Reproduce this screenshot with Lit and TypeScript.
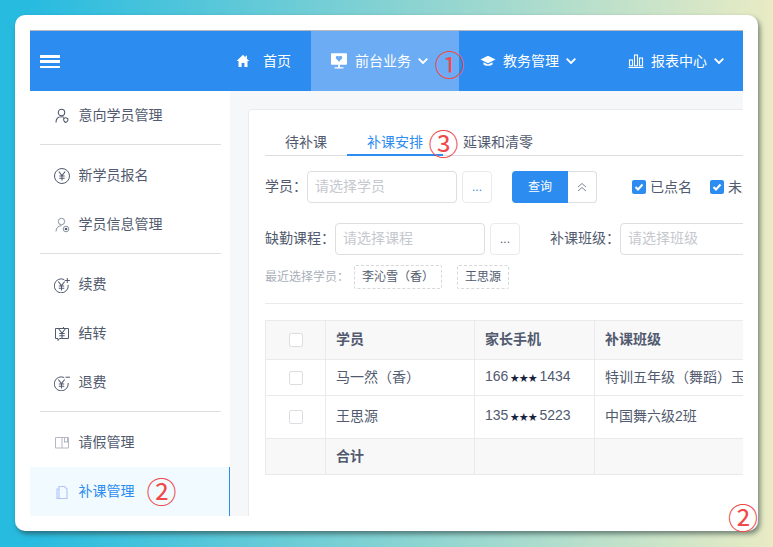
import { LitElement, html, css, svg } from "lit";
import { customElement } from "lit/decorators.js";

const chevron = html`<svg class="chev" viewBox="0 0 10 6" width="10" height="6"><path d="M.7.7 5 5 9.300.7" fill="none" stroke="#fff" stroke-width="1.900"/></svg>`;

const navIcons: Record<string, any> = {
  home: svg`<path d="M8 1.800 1.600 8h1.900v6h3.100V10h2.800v4h3.100V8h1.900L12 5.900V2.800h-1.500v1.600z" fill="#fff"/>`,
  desk: svg`<path fill-rule="evenodd" d="M.8.300h14.400a.8.8 0 0 1 .8.8v9.800a.8.8 0 0 1-.8.8H.8a.8.8 0 0 1-.8-.8V1.100a.8.8 0 0 1 .8-.8zM8 8.800 11 5.600a1.800 1.800 0 0 0-2.600-2.400L8 3.600l-.4-.4A1.800 1.800 0 0 0 5 5.600z" fill="#fff"/><path d="M7 11.500h2v2.700h3.500V15.600H3.500v-1.400H7z" fill="#fff"/>`,
  cap: svg`<path d="M8 2.800 .5 6.500 8 10.200l7.500-3.700z" fill="#fff"/><path d="M3.500 9.300V11.500C5 13.300 11 13.300 12.500 11.500V9.300L8 11.500z" fill="#fff"/>`,
  chart: svg`<g fill="none" stroke="#fff" stroke-width="1.100"><path d="M.5 14.500h15"/><rect x="1.500" y="7" width="3" height="5.800"/><rect x="6.500" y="2" width="3" height="10.800"/><rect x="11.500" y="5" width="3" height="7.800"/></g>`,
};

const navs = [
  { label: "首页", icon: "home", cls: "home" },
  { label: "前台业务", icon: "desk", cls: "active", chev: true },
  { label: "教务管理", icon: "cap", cls: "", chev: true },
  { label: "报表中心", icon: "chart", cls: "", chev: true },
];

const yen = (x: number, y: number) => svg`<path transform="translate(${x} ${y})" d="M-3.200-4.500 0-.4l3.200-4.100M0-.4v5M-2.700 0h5.400M-2.700 2.200h5.400" fill="none" stroke="#515a6e" stroke-width="1.050"/>`;
const sideIcons: Record<string, any> = {
  person: svg`<g fill="none" stroke="#515a6e" stroke-width="1.100"><circle cx="7.500" cy="4.500" r="3.200"/><path d="M2 14.500C2 10.800 4.300 8.700 7.500 8.700c1 0 1.800.2 2.500.6"/><path d="M9.800 10.500c1-1 2.700-.7 4 .2.600 1.600-.7 3.300-2 3.700-1.400-.4-2.600-2.300-2-3.900z"/></g>`,
  yen: svg`<circle cx="8" cy="8" r="7.500" fill="none" stroke="#515a6e" stroke-width="1"/>${yen(8, 8)}`,
  info: svg`<g fill="none" stroke="#8b92a0" stroke-width="1"><circle cx="7.500" cy="4.500" r="3.200"/><path d="M2 14.500C2 10.800 4.300 8.700 7.500 8.700"/><circle cx="12" cy="12" r="2.800"/></g><circle cx="12" cy="12" r="1.300" fill="#515a6e"/>`,
  plus: svg`<path d="M10.200 2.500A7 7 0 1 0 14.200 8" fill="none" stroke="#515a6e" stroke-width="1"/><path d="M10.800 3.500h5M13.300 1v5" stroke="#515a6e" stroke-width="1"/>${yen(7.500, 9)}`,
  trans: svg`<path d="M1.500 2.500H14.500V12.500H5.500L4 14.500V12.500H1.500z" fill="none" stroke="#515a6e" stroke-width="1"/><path d="M8.500 2.500 10 1" stroke="#515a6e"/>${yen(8, 7.500)}`,
  minus: svg`<path d="M10.200 2.500A7 7 0 1 0 14.200 8" fill="none" stroke="#515a6e" stroke-width="1"/><path d="M11.500 2.300h4.500" stroke="#7f8796" stroke-width="1.400"/>${yen(7.500, 9)}`,
  leave: svg`<g fill="none" stroke="#b4b8c2" stroke-width="1"><path d="M1.500 2.500H14.500V13H1.500zM8 2.500V13M10.500 2.500V7.500L12 6.500 13.500 7.500V2.500"/></g>`,
  doc: svg`<g fill="none" stroke="#b3c4f5" stroke-width="1.100"><path d="M5 2.500H10.500L13 5V14.500H5zM5 5H3V14.500H5"/></g>`,
};

const groups = [
  [{ label: "意向学员管理", icon: "person" }],
  [{ label: "新学员报名", icon: "yen" }, { label: "学员信息管理", icon: "info" }],
  [{ label: "续费", icon: "plus" }, { label: "结转", icon: "trans" }, { label: "退费", icon: "minus" }],
  [{ label: "请假管理", icon: "leave" }, { label: "补课管理", icon: "doc", active: true }],
];

const marks = [
  { n: "①", cls: "m1" },
  { n: "②", cls: "m2" },
  { n: "③", cls: "m3" },
  { n: "②", cls: "m4" },
];

@customElement("app-root")
export class AppRoot extends LitElement {
  static styles = css`
    :host {
      display: block; width: 773px; height: 547px; box-sizing: border-box; padding: 15px 15px 16px;
      background: linear-gradient(90deg, #28bbe0 4%, #e9ebc4 100%);
      font: 14px/20px "Liberation Sans", "Noto Sans CJK SC", sans-serif; color: #515a6e; overflow: hidden; position: relative;
    }
    * { box-sizing: border-box; }
    .win { height: 516px; padding: 15px; background: #fff; border-radius: 10px; box-shadow: 2px 3px 5px rgba(40,60,60,.6); }
    .app { height: 486px; overflow: hidden; display: flex; flex-direction: column; }
    header { height: 61px; flex: none; display: flex; background: #2d8cf0; border-top: 1px solid #b5b9be; color: #fff; }
    .burger { width: 186px; flex: none; padding: 24px 0 0 10px; }
    .burger i { display: block; width: 20px; height: 2.600px; background: #fff; margin-bottom: 2.800px; }
    .nav { flex: none; width: 148px; height: 60px; display: flex; align-items: center; padding-left: 20px; }
    .nav.home { width: 95px; }
    .nav.active { background: #6cacf4; }
    .nav svg.ic { margin-right: 8px; flex: none; }
    .nav.home svg.ic { margin-right: 12.500px; margin-left: -1.500px; }
    .nav .chev { margin-left: 7px; }
    .nav:nth-child(n+4) { padding-left: 21px; }
    .nav:nth-child(n+4) svg.ic { margin-right: 7px; }
    .body { flex: 1; display: flex; min-height: 0; }
    aside { width: 200px; flex: none; }
    .item { height: 49px; display: flex; align-items: center; padding: 0 0 2px 24px; gap: 8.500px; }
    .item svg { position: relative; top: 1px; }
    .item.on { background: #f0faff; color: #2d8cf0; border-right: 1px solid #2d8cf0; }
    .sep { height: 1px; background: #dcdee2; margin: 4px 9px 6px 10px; }
    main { flex: 1; min-width: 0; background: #f5f7f9; padding: 18px; overflow: hidden; }
    .card { width: 720px; height: 500px; background: #fff; border: 1px solid #e8eaec; border-radius: 4px; padding: 15px 16px; }
    .tabs { display: flex; height: 31px; border-bottom: 1px solid #dcdee2; margin-bottom: 15px; }
    .tab { height: 31px; padding: 7px 20px 0; border-bottom: 2px solid transparent; }
    .tab.on { color: #2d8cf0; border-bottom-color: #2d8cf0; }
    .row { display: flex; align-items: center; height: 32px; margin-bottom: 20px; white-space: nowrap; }
    .lab { flex: none; padding-bottom: 2px; }
    .l1 { width: 42px; } .l2 { width: 70px; }
    .input { flex: none; width: 150px; height: 32px; border: 1px solid #dcdee2; border-radius: 4px; padding: 4px 7px; color: #c5c8ce; }
    .dots { flex: none; width: 30px; height: 32px; margin-left: 5px; border: 1px solid #e8eaec; border-radius: 4px; display: flex; align-items: center; justify-content: center; color: #2d8cf0; font-size: 12px; }
    .dots.dark { color: #515a6e; }
    .query { flex: none; margin-left: 20px; width: 56px; height: 32px; background: #2d8cf0; color: #fff; font-size: 12px; border-radius: 4px 0 0 4px; display: flex; align-items: center; justify-content: center; }
    .more { flex: none; width: 29px; height: 32px; border: 1px solid #dcdee2; border-left: 0; border-radius: 0 4px 4px 0; display: flex; align-items: center; justify-content: center; }
    .check { display: flex; align-items: center; gap: 4px; }
    .c1 { margin-left: 35px; } .c2 { margin-left: 18px; }
    .box { width: 14px; height: 14px; background: #2d8cf0; border-radius: 2px; display: flex; align-items: center; justify-content: center; }
    .l3 { margin-left: 30px; }
    .recent { display: flex; align-items: center; height: 24px; margin-top: -10px; white-space: nowrap; }
    .rl { width: 89px; font-size: 12px; color: #a9afba; }
    .tag { height: 24px; padding: 0 7px; border: 1px dashed #d5d7db; border-radius: 2px; font-size: 12px; line-height: 22px; margin-right: 15px; }
    hr { border: 0; height: 1px; background: #e8eaec; margin: 14px 0 16px; }
    table { border-collapse: collapse; table-layout: fixed; width: 700px; border: 1px solid #dcdee2; }
    col.a { width: 60px; } col.b { width: 149px; } col.c { width: 120px; }
    td, th { border: 1px solid #e8eaec; padding: 0 10px 2px; text-align: left; white-space: nowrap; overflow: hidden; font-weight: 400; }
    td.k, th.k { padding: 0; }
    td.k + td, th.k + th { padding-left: 10px; }
    th, .foot td { background: #f8f8f9; font-weight: 700; }
    tr.h { height: 39px; } tr.r1 { height: 36px; } tr.r2 { height: 43px; } tr.f { height: 36px; }
    .cb { display: block; margin: 0 auto; width: 14px; height: 14px; border: 1px solid #dcdee2; border-radius: 2px; background: #fff; }
    .star { font-size: 9px; color: #17233d; margin: 0 2px; letter-spacing: 0; }
    .mark { position: absolute; width: 30px; height: 30px; color: #ee4a4a; font: 400 30px/30px "Noto Sans CJK SC", sans-serif; text-align: center; }
    .m1 { left: 434.500px; top: 47.500px; }
    .m2 { left: 146.500px; top: 475px; }
    .m3 { left: 428.500px; top: 126.500px; }
    .m4 { left: 728px; top: 500.500px; }
  `;

  render() {
    const tick = html`<span class="box"><svg width="10" height="10" viewBox="0 0 10 10"><path d="M1.500 5 4 7.500 8.500 2.500" fill="none" stroke="#fff" stroke-width="2"/></svg></span>`;
    return html`
      <div class="win"><div class="app">
        <header>
          <div class="burger"><i></i><i></i><i></i></div>
          ${navs.map((n) => html`<div class="nav ${n.cls}">
            <svg class="ic" viewBox="0 0 16 16" width="16" height="16">${navIcons[n.icon]}</svg>
            ${n.label}${n.chev ? chevron : ""}
          </div>`)}
        </header>
        <div class="body">
          <aside>
            ${groups.map((g, i) => html`
              ${i ? html`<div class="sep"></div>` : ""}
              ${g.map((it: any) => html`<div class="item ${it.active ? "on" : ""}">
                <svg viewBox="0 0 16 16" width="16" height="16">${sideIcons[it.icon]}</svg>${it.label}
              </div>`)}
            `)}
          </aside>
          <main>
            <div class="card">
              <div class="tabs">
                <div class="tab">待补课</div><div class="tab on">补课安排</div><div class="tab">延课和清零</div>
              </div>
              <div class="row">
                <div class="lab l1">学员：</div>
                <div class="input">请选择学员</div>
                <div class="dots">...</div>
                <div class="query">查询</div>
                <div class="more"><svg width="12" height="12" viewBox="0 0 12 12"><path d="M2 6 6 2.500 10 6M2 10 6 6.500 10 10" fill="none" stroke="#808695" stroke-width="1"/></svg></div>
                <div class="check c1">${tick}已点名</div>
                <div class="check c2">${tick}未点名</div>
              </div>
              <div class="row">
                <div class="lab l2">缺勤课程：</div>
                <div class="input">请选择课程</div>
                <div class="dots dark">...</div>
                <div class="lab l2 l3">补课班级：</div>
                <div class="input">请选择班级</div>
              </div>
              <div class="recent">
                <div class="rl">最近选择学员：</div>
                <div class="tag">李沁雪（香）</div>
                <div class="tag">王思源</div>
              </div>
              <hr />
              <table>
                <colgroup><col class="a" /><col class="b" /><col class="c" /><col /></colgroup>
                <tr class="h"><th class="k"><span class="cb"></span></th><th>学员</th><th>家长手机</th><th>补课班级</th></tr>
                <tr class="r1"><td class="k"><span class="cb"></span></td><td>马一然（香）</td><td>166<span class="star">★★★</span>1434</td><td>特训五年级（舞蹈）玉林校区班</td></tr>
                <tr class="r2"><td class="k"><span class="cb"></span></td><td>王思源</td><td>135<span class="star">★★★</span>5223</td><td>中国舞六级2班</td></tr>
                <tr class="f foot"><td class="k"></td><td>合计</td><td></td><td></td></tr>
              </table>
            </div>
          </main>
        </div>
      </div></div>
      ${marks.map((m) => html`<div class="mark ${m.cls}">${m.n}</div>`)}
    `;
  }
}
